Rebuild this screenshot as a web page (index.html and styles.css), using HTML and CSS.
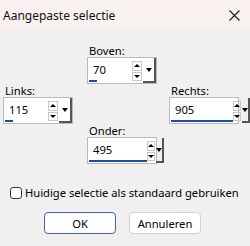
FILE: index.html
```html
<!DOCTYPE html>
<html>
<head>
	<meta charset="UTF-8">
	<title>Aangepaste selectie</title>
	<link rel="stylesheet" href="styles.css">
</head>
<body>
	<div class="titlebar">
		<span class="titel">Aangepaste selectie</span>
		<svg class="sluiten" width="11" height="11" viewBox="0 0 11 11"><path d="M0.5 0.5 L10.5 10.5 M10.5 0.5 L0.5 10.5" stroke="#1a1a1a" stroke-width="1.1" fill="none"/></svg>
	</div>

	<div class="inhoud">
		<div class="velden">
			<div class="veld boven">
				<div class="label">Boven:</div>
				<div class="spin">
					<div class="waarde"><span>70</span><i class="balk" style="width:8px"></i></div>
					<div class="pijlen"><span class="op"></span><span class="neer"></span></div>
					<div class="lijst"></div>
				</div>
			</div>
			<div class="veld links">
				<div class="label">Links:</div>
				<div class="spin">
					<div class="waarde"><span>115</span><i class="balk" style="width:8px"></i></div>
					<div class="pijlen"><span class="op"></span><span class="neer"></span></div>
					<div class="lijst"></div>
				</div>
			</div>
			<div class="veld rechts">
				<div class="label">Rechts:</div>
				<div class="spin">
					<div class="waarde"><span>905</span><i class="balk" style="width:62px"></i></div>
					<div class="pijlen"><span class="op"></span><span class="neer"></span></div>
					<div class="lijst"></div>
				</div>
			</div>
			<div class="veld onder">
				<div class="label">Onder:</div>
				<div class="spin">
					<div class="waarde"><span>495</span><i class="balk" style="width:58px"></i></div>
					<div class="pijlen"><span class="op"></span><span class="neer"></span></div>
					<div class="lijst"></div>
				</div>
			</div>
		</div>

		<label class="vinkje"><span class="vakje"></span>Huidige selectie als standaard gebruiken</label>

		<div class="knoppen">
			<button class="knop standaard">OK</button>
			<button class="knop">Annuleren</button>
		</div>
	</div>
</body>
</html>
```

FILE: styles.css
```css
body {
	margin: 0;
	width: 250px;
	height: 246px;
	background: #f0f0f0;
	font-family: "Noto Sans", sans-serif;
	font-size: 11.2px;
	color: #000;
	overflow: hidden;
}

.titlebar {
	height: 30px;
	background: #f9f1f0;
	display: flex;
	align-items: center;
	justify-content: space-between;
	padding: 0 10px 0 3px;
}

.titel {
	font-size: 12px;
	color: #111;
}

.inhoud {
	padding-top: 14px;
}

.velden {
	display: grid;
	grid-template-columns: 84px 82px 70px;
	grid-template-rows: 40px 40px 40px;
	padding-left: 3px;
}

.boven { grid-column: 2; grid-row: 1; }
.links { grid-column: 1; grid-row: 2; }
.rechts { grid-column: 3; grid-row: 2; }
.onder { grid-column: 2; grid-row: 3; }

.label {
	height: 13px;
	line-height: 13px;
	padding-left: 2px;
}

.spin {
	display: flex;
	width: 70px;
	height: 27px;
	box-sizing: border-box;
	border: 1px solid #b9b9b9;
	background: #fff;
}

.waarde {
	flex: 1;
	display: flex;
	flex-direction: column;
	padding-top: 5px;
}

.waarde span {
	padding-left: 5px;
	line-height: 14px;
}

.balk {
	display: block;
	height: 2px;
	margin: auto 0 1px 1px;
	background: #1c4e9b;
}

.pijlen {
	width: 10px;
	display: flex;
	flex-direction: column;
	gap: 1px;
	padding: 3px 0 2px;
}

.pijlen span {
	flex: 1;
	border: 1px solid #c8c8c8;
	display: flex;
	align-items: center;
	justify-content: center;
}

.op::before {
	content: "";
	border-left: 3px solid transparent;
	border-right: 3px solid transparent;
	border-bottom: 3px solid #000;
}

.neer::before {
	content: "";
	border-left: 3px solid transparent;
	border-right: 3px solid transparent;
	border-top: 3px solid #000;
}

.lijst {
	width: 11px;
	margin-left: 1px;
	border-right: 2px solid #555;
	border-bottom: 2px solid #555;
	display: flex;
	justify-content: center;
	padding-top: 10px;
}

.lijst::before {
	content: "";
	height: 0;
	border-left: 3px solid transparent;
	border-right: 3px solid transparent;
	border-top: 4px solid #000;
}

.vinkje {
	display: flex;
	align-items: center;
	margin: 22px 0 0 10px;
	height: 13px;
	white-space: nowrap;
}

.vakje {
	width: 12px;
	height: 12px;
	box-sizing: border-box;
	border: 1px solid #333;
	border-radius: 3px;
	background: #fff;
	margin-right: 3px;
}

.knoppen {
	display: flex;
	gap: 13px;
	margin: 13px 0 0 44px;
}

.knop {
	width: 72px;
	height: 22px;
	background: #fff;
	border: 1px solid #d0d0d0;
	border-radius: 4px;
	font-family: "Noto Sans", sans-serif;
	font-size: 11.2px;
	color: #000;
	padding: 0;
}

.standaard {
	border-color: #3f64a8;
}
```
